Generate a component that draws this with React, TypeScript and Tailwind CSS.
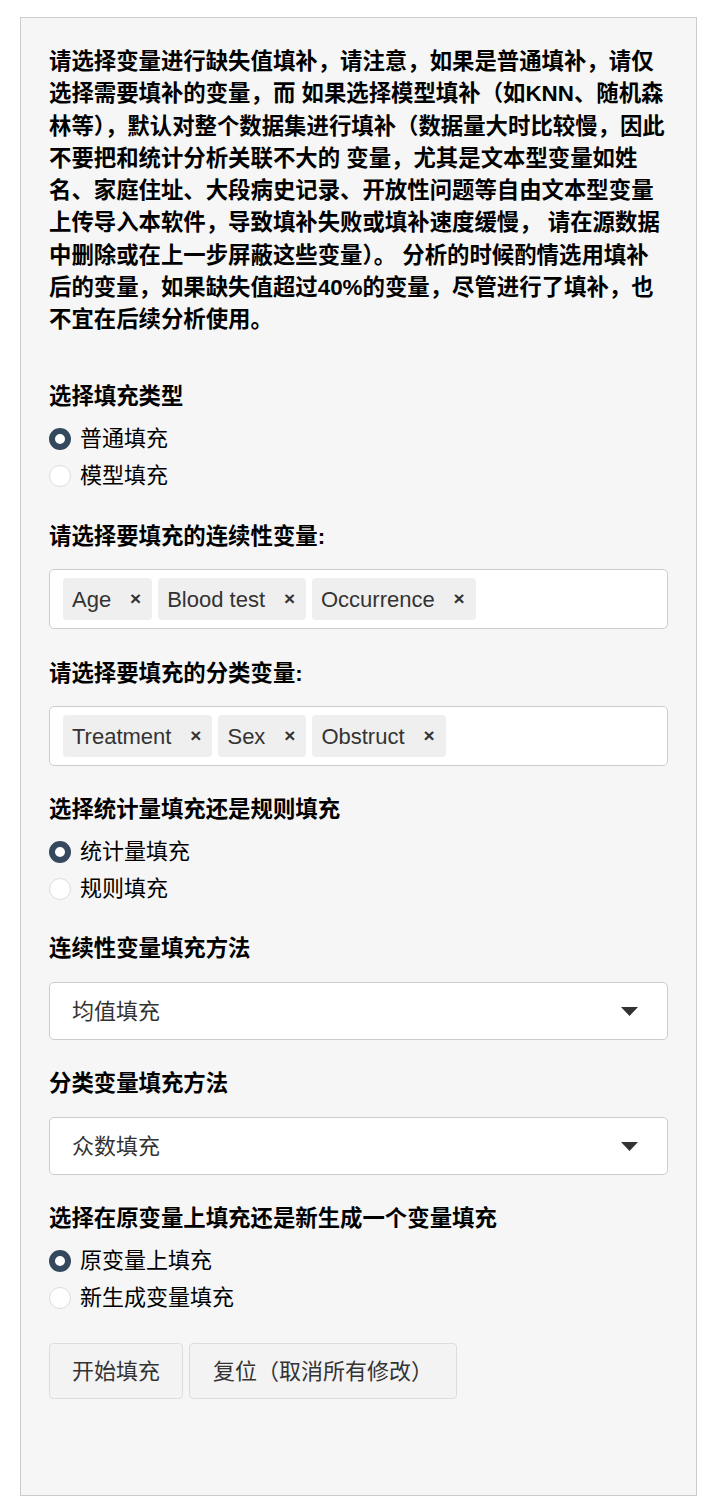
import React from "react";

const intro = [
  "请选择变量进行缺失值填补，请注意，如果是普通填补，请仅",
  "选择需要填补的变量，而 如果选择模型填补（如KNN、随机森",
  "林等），默认对整个数据集进行填补（数据量大时比较慢，因此",
  "不要把和统计分析关联不大的 变量，尤其是文本型变量如姓",
  "名、家庭住址、大段病史记录、开放性问题等自由文本型变量",
  "上传导入本软件，导致填补失败或填补速度缓慢， 请在源数据",
  "中删除或在上一步屏蔽这些变量）。 分析的时候酌情选用填补",
  "后的变量，如果缺失值超过40%的变量，尽管进行了填补，也",
  "不宜在后续分析使用。",
];

function Label({ children, className = "" }: { children: React.ReactNode; className?: string }) {
  return <div className={`h-[32px] text-[22.4px] leading-[32px] font-bold text-black ${className}`}>{children}</div>;
}

function RadioGroup({ options, checked }: { options: string[]; checked: number }) {
  return (
    <div className="flex flex-col">
      {options.map((o, i) => (
        <div key={o} className="flex h-[37px] items-center gap-[9px]">
          {i === checked ? (
            <span className="h-[22px] w-[22px] rounded-full border-[6px] border-[#34495e] bg-white" />
          ) : (
            <span className="h-[22px] w-[22px] rounded-full border border-[#dddddd] bg-white" />
          )}
          <span className="text-[22px] text-black">{o}</span>
        </div>
      ))}
    </div>
  );
}

function TagInput({ tags }: { tags: string[] }) {
  return (
    <div className="flex h-[60px] items-center gap-[6px] rounded-[5px] border border-[#cccccc] bg-white px-[13px]">
      {tags.map((t) => (
        <div key={t} className="flex h-[42px] items-center rounded-[4px] bg-[#efefef] pl-[9px] text-[22px] text-[#333333]">
          <span>{t}</span>
          <span className="w-[41px] pr-[11px] text-right text-[19px] font-bold">×</span>
        </div>
      ))}
    </div>
  );
}

function Select({ value }: { value: string }) {
  return (
    <div className="flex h-[58px] items-center justify-between rounded-[5px] border border-[#cccccc] bg-white pl-[22px] pr-[29px]">
      <span className="text-[22px] text-[#333333]">{value}</span>
      <svg width="17" height="9" viewBox="0 0 17 9">
        <path d="M0 0 H17 L8.5 9 Z" fill="#333333" />
      </svg>
    </div>
  );
}

export default function App() {
  return (
    <div className="min-h-screen bg-white pt-[17px] pl-[20px] pr-[8px] font-['Liberation_Sans','Noto_Sans_CJK_SC',sans-serif]">
      <div className="h-[1479px] border border-[#cccccc] bg-[#f6f6f6] px-[28px] pt-[28px]">
        <p className="mb-[45px] text-[22.4px] leading-[32.25px] font-bold text-black">
          {intro.map((l, i) => (
            <React.Fragment key={i}>
              {l}
              {i < intro.length - 1 && <br />}
            </React.Fragment>
          ))}
        </p>

        <div className="mb-[27px]">
          <Label className="mb-[7px]">选择填充类型</Label>
          <RadioGroup options={["普通填充", "模型填充"]} checked={0} />
        </div>

        <div className="mb-[29px]">
          <Label className="mb-[16px]">请选择要填充的连续性变量:</Label>
          <TagInput tags={["Age", "Blood test", "Occurrence"]} />
        </div>

        <div className="mb-[28px]">
          <Label className="mb-[16px]">请选择要填充的分类变量:</Label>
          <TagInput tags={["Treatment", "Sex", "Obstruct"]} />
        </div>

        <div className="mb-[26px]">
          <Label className="mb-[7px]">选择统计量填充还是规则填充</Label>
          <RadioGroup options={["统计量填充", "规则填充"]} checked={0} />
        </div>

        <div className="mb-[28px]">
          <Label className="mb-[17px]">连续性变量填充方法</Label>
          <Select value="均值填充" />
        </div>

        <div className="mb-[28px]">
          <Label className="mb-[17px]">分类变量填充方法</Label>
          <Select value="众数填充" />
        </div>

        <div className="mb-[27px]">
          <Label className="mb-[7px]">选择在原变量上填充还是新生成一个变量填充</Label>
          <RadioGroup options={["原变量上填充", "新生成变量填充"]} checked={0} />
        </div>

        <div className="flex gap-[6px]">
          <button className="h-[56px] rounded-[4px] border border-[#dddddd] bg-[#f3f3f3] px-[22px] text-[22px] text-[#333333]">
            开始填充
          </button>
          <button className="h-[56px] rounded-[4px] border border-[#dddddd] bg-[#f3f3f3] px-[23px] text-[22px] text-[#333333]">
            复位（取消所有修改）
          </button>
        </div>
      </div>
    </div>
  );
}
